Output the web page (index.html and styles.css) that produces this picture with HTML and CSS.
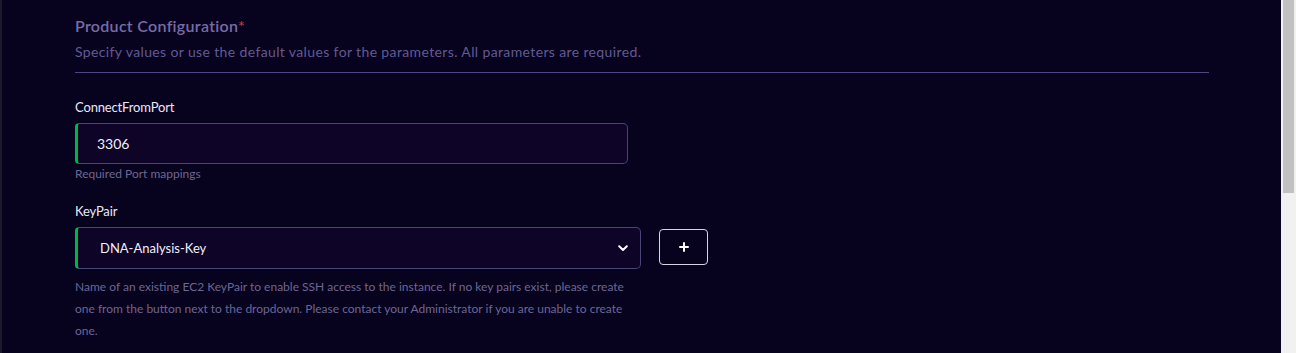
FILE: index.html
```html
<!DOCTYPE html>
<html lang="en">
<head>
<meta charset="utf-8">
<title>Product Configuration</title>
<link rel="stylesheet" href="styles.css">
</head>
<body>
<div class="frame">
  <div class="edge"></div>
  <main class="page">
    <section class="section">
      <header class="section-head">
        <h2 class="title">Product Configuration<span class="req">*</span></h2>
        <p class="subtitle">Specify values or use the default values for the parameters. All parameters are required.</p>
      </header>

      <div class="field">
        <label class="label">ConnectFromPort</label>
        <div class="input input-port">3306</div>
        <p class="help">Required Port mappings</p>
      </div>

      <div class="field field-key">
        <label class="label">KeyPair</label>
        <div class="row">
          <div class="input input-select">
            <span>DNA-Analysis-Key</span>
            <svg class="chev" width="10" height="7" viewBox="0 0 10 7"><path d="M1.2 1.3 L5 5 L8.8 1.3" fill="none" stroke="#ffffff" stroke-width="2" stroke-linecap="round" stroke-linejoin="round"/></svg>
          </div>
          <button class="add-btn" type="button">
            <svg width="10" height="10" viewBox="0 0 10 10"><path d="M5 1 V9 M1 5 H9" stroke="#ffffff" stroke-width="2" stroke-linecap="round"/></svg>
          </button>
        </div>
        <p class="help help-long">Name of an existing EC2 KeyPair to enable SSH access to the instance. If no key pairs exist, please create one from the button next to the dropdown. Please contact your Administrator if you are unable to create one.</p>
      </div>
    </section>
  </main>
  <div class="scrollbar"><div class="thumb"></div></div>
</div>
</body>
</html>
```

FILE: styles.css
```css
* { box-sizing: border-box; }
html, body {
  margin: 0;
  padding: 0;
  height: 353px;
  overflow: hidden;
  background: #07021e;
}
body {
  font-family: "Lato", "Noto Sans", sans-serif;
  color: #e6e2f5;
}
.frame {
  display: flex;
  height: 353px;
}
.edge {
  width: 2px;
  background: #1c1a2a;
  flex: none;
}
.page {
  flex: 1;
  background: #07021e;
  padding: 15px 0 0 73px;
}
.section {
  width: 1134px;
}
.section-head {
  border-bottom: 1px solid #4d4683;
  padding-bottom: 10px;
}
.title {
  margin: 0;
  font-size: 16px;
  font-weight: 600;
  letter-spacing: 0.3px;
  color: #776ca6;
  line-height: 22px;
}
.req { color: #b53a4a; }
.subtitle {
  margin: 5px 0 0;
  font-size: 14px;
  letter-spacing: 0.37px;
  color: #625a93;
  line-height: 20px;
}
.field { margin-top: 26px; }
.field-key { margin-top: 21px; }
.label {
  display: block;
  font-size: 13px;
  letter-spacing: -0.15px;
  line-height: 16px;
  color: #ebe7f8;
  margin-bottom: 8px;
}
.input {
  background: #0e0428;
  border: 1px solid #4a4577;
  border-left: 3px solid #00b548;
  border-radius: 4px 5px 5px 4px;
  height: 41px;
  font-size: 13px;
  color: #f0eef8;
  display: flex;
  align-items: center;
}
.input-port {
  width: 553px;
  padding-left: 19px;
  font-size: 14px;
}
.row {
  display: flex;
  align-items: center;
  gap: 18px;
}
.input-select {
  width: 566px;
  height: 42px;
  padding: 0 12px 0 22px;
  justify-content: space-between;
}
.chev { display: block; margin-top: 1px; }
.add-btn {
  width: 49px;
  height: 36px;
  border: 1px solid #d8d6e2;
  border-radius: 4px;
  background: #07021e;
  display: flex;
  align-items: center;
  justify-content: center;
  padding: 0;
  margin-top: -2px;
}
.add-btn svg { display: block; }
.help {
  margin: 2px 0 0;
  font-size: 12px;
  line-height: 16px;
  color: #6d6693;
}
.help-long {
  width: 570px;
  line-height: 22px;
  margin-top: 7px;
}
.scrollbar {
  width: 15px;
  flex: none;
  background: #f1f1f1;
  padding: 0 2px;
}
.thumb {
  height: 193px;
  background: #c1c1c1;
}
```
